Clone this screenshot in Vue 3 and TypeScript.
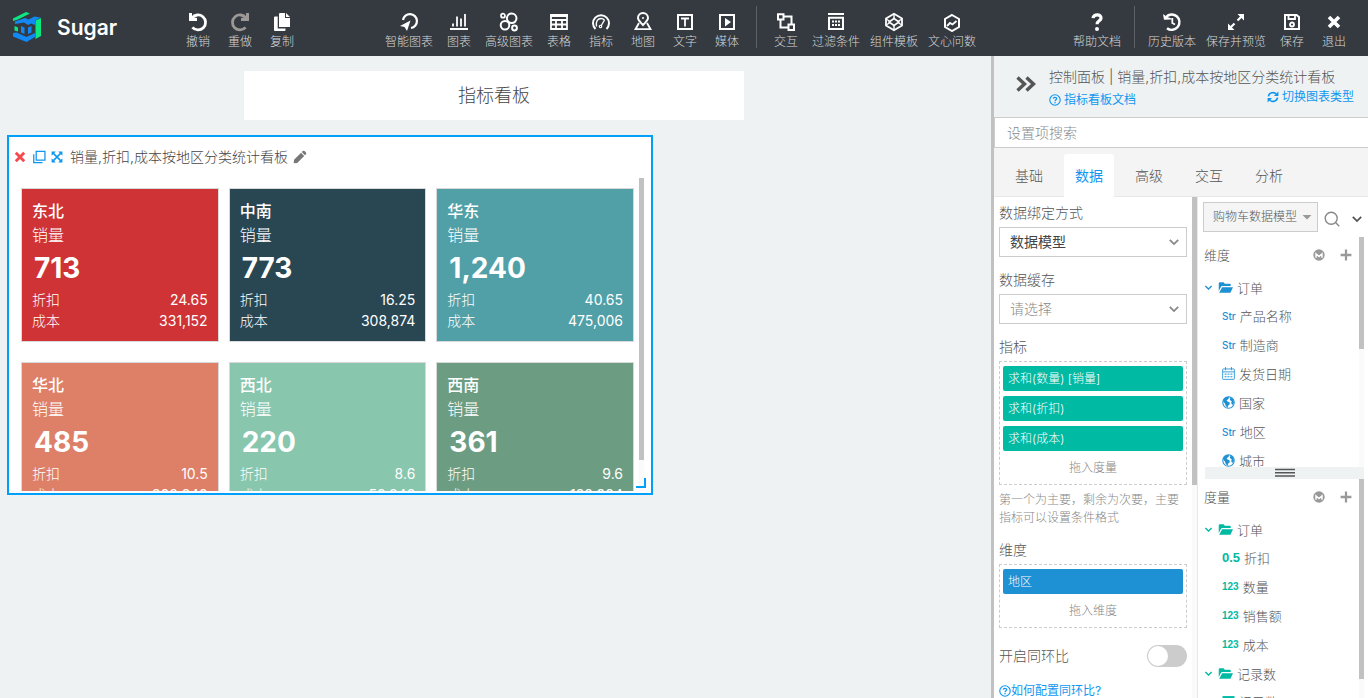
<script setup lang="ts">
import { h, ref } from 'vue'

interface Shape {
  d: string
  fill?: boolean
  w?: number
  color?: string
}

const circle = (x: number, y: number, r: number): string =>
  `M${x - r} ${y}a${r} ${r} 0 1 0 ${2 * r} 0a${r} ${r} 0 1 0 ${-2 * r} 0z`

const shapes: Record<string, Shape[]> = {
  logo: [
    { d: 'M1 7.5L14 1l4 1.6L5.5 8.8 1 10z', fill: true, color: '#0be881' },
    { d: 'M23.5 9.5l5.5-2.500v18l-5.500 3z', fill: true, color: '#0be881' },
    { d: 'M3 10.500L13 7l3.500 1.500L22.500 5.500l6 1-5.500 3v4.500l-4-1.500-3 1.500-4-2.500L3 13z', fill: true, color: '#1288f5' },
    { d: 'M1 22l3.500-.500 10 4.500 8.500-4v4L14.500 31 1 25.500z', fill: true, color: '#1288f5' },
    { d: 'M2.5 15l3.500 1.500V20.500l-3.500-1z', fill: true, color: '#0be881' },
    { d: 'M9 15l3.500 1.500v6.500L9 21.500zM16 16.500l3.500-1.500v6.500L16 23z', fill: true, color: '#1288f5' },
  ],
  undo: [
    { d: 'M1 1h3v3.6l1 .6L9 6v3H1z', fill: true },
    { d: 'M4 6A7.5 7.5 0 1 1 4.4 15.4', w: 2.8 },
  ],
  redo: [
    { d: 'M19 1h-3v3.6l-1 .6L11 6v3h8z', fill: true },
    { d: 'M16 6A7.5 7.5 0 1 0 15.6 15.4', w: 2.8 },
  ],
  copy: [
    { d: 'M8 1h5v5h5v9H7V2a1 1 0 0 1 1-1zM14 1l4 4h-4z', fill: true },
    { d: 'M2 5.5a1 1 0 0 1 1-1h2.7v12h7.8V18a1 1 0 0 1-1 1H3a1 1 0 0 1-1-1z', fill: true },
  ],
  smart: [
    { d: 'M4 8A7 7 0 1 1 12 16', w: 2.2 },
    { d: 'M11.5 8.5L1 14l4.5 1L8 19z', fill: true },
  ],
  bars: [{ d: 'M1 17h18M4 14.500v-3M8 14.500V4.500M12 14.500V6.500M16 14.500V2', w: 1.8 }],
  bubbles: [
    { d: circle(4, 3.7, 2), w: 1.7 },
    { d: circle(12.7, 6.3, 4.8), w: 2 },
    { d: circle(6, 13.3, 4.3), w: 2 },
    { d: circle(15.5, 16, 2.4), w: 2 },
  ],
  table: [{ d: 'M2 3h16v14H2zM2 8h16M2 12.5h16M7 8v9M13 8v9', w: 1.8 }, { d: 'M1 2h18v3H1z', fill: true }],
  gauge: [
    { d: 'M4.5 17A8 8 0 1 1 15.5 17', w: 2 },
    { d: 'M5.5 14.500C4.500 9 7 6.500 10 6.500c1.500 0 2.500.500 3.500 1.500M13.500 8l-3.500 6', w: 1.4 },
    { d: circle(9.5, 14.5, 1.2), w: 1.2 },
  ],
  place: [
    { d: 'M10 13C6.500 9.500 5 8 5 6a5 5 0 0 1 10 0c0 2-1.500 3.500-5 7z', w: 2 },
    { d: circle(10, 6, 1), fill: true },
    { d: 'M6 11l-3.500 6.200h15L14 11', w: 1.800 },
  ],
  text: [{ d: 'M3 3h14v14H3z', w: 2 }, { d: 'M6 6.500h8M10 6.500V14.500', w: 1.8 }],
  media: [{ d: 'M3 3h14v14H3z', w: 2 }, { d: 'M8 6l6 4-6 4.500z', fill: true }],
  link: [
    { d: 'M2 2.200h5.500V7.500H2zM12.500 12.500H18V18h-5.500zM7.500 4.500H15.500V12.500M4.500 7.500V15.500H12.500', w: 2 },
  ],
  filter: [
    { d: 'M2 2h16M3 5.800h14V17H3z', w: 2 },
    { d: 'M6 9.500h8M6 13h8', w: 2, color: 'dots' },
  ],
  cube: [
    { d: 'M10 1.800l8 4.700v7L10 18.200l-8-4.700v-7z', w: 1.800 },
    { d: 'M10 2v4.500M10 18v-4.500M2 7l3.500 2M18 7l-3.500 2M2 13l3.500-2M18 13l-3.500-2', w: 1.400 },
    { d: 'M10 6.500l5 3.500-5 3.500L5 10z', w: 1.600 },
  ],
  wenxin: [{ d: 'M10 3l7 4v8l-7 4-7-4V7z', w: 2 }, { d: 'M5 14l3-3 2.500 1.500L14.500 9', w: 1.800 }],
  help: [{ d: 'M6 6.200C6.300 1.500 14.500 1.800 14 6.200c-.3 2.800-3.900 2.500-3.900 6', w: 3.2 }, { d: circle(10, 17, 2), fill: true }],
  history: [
    { d: 'M1 2.200l1.500.8L4 4.500 9.500 6.500V7.500L2 7.700z', fill: true },
    { d: 'M4 5A7.700 7.700 0 1 1 5 16.200', w: 2.400 },
    { d: 'M10.300 6v5l2.700 1.500', w: 1.800 },
  ],
  expand: [
    { d: 'M11.500 2H18v6.500zM2 11.500V18h6.500z', fill: true },
    { d: 'M16 4l-4.500 4.500M8.500 11.500L4 16', w: 2.200 },
  ],
  save: [
    { d: 'M3 3h11.500L17 5v12H3z', w: 2 },
    { d: 'M6.500 3v4h6.500V3', w: 1.800 },
    { d: circle(10, 12.500, 2), w: 1.800 },
  ],
  close: [{ d: 'M5 5l10 10M15 5L5 15', w: 3.600 }],
  forward: [{ d: 'M1.500 3.500l7 6.500-7 6.500M10.500 3.500l7 6.500-7 6.500', w: 3.400 }],
  question: [
    { d: circle(10, 10, 8.700), w: 1.900 },
    { d: 'M7.200 8C7.300 4.800 13 5 12.800 8c-.1 1.800-2.700 1.700-2.700 4', w: 2.200 },
    { d: circle(10, 14.500, 1.300), fill: true },
  ],
  refresh: [
    { d: 'M2.500 9A7.500 7 0 0 1 15.500 5M17.500 11A7.500 7 0 0 1 4.500 15', w: 2.600 },
    { d: 'M19 1v7.500h-7.500zM1 19v-7.500h7.500z', fill: true },
  ],
  clone: [{ d: 'M6 2h12.500v12.500H6zM2.500 6v12h12.500', w: 1.800 }],
  arrows: [
    { d: 'M1 1h7L1 8zM19 1v7l-7-7zM1 19v-7l7 7zM19 19h-7l7-7z', fill: true },
    { d: 'M4 4l12 12M16 4L4 16', w: 2.600 },
  ],
  cross: [{ d: 'M4 4l12 12M16 4L4 16', w: 4 }],
  pencil: [{ d: 'M14 1.500a1.800 1.800 0 0 1 2.500 0l2 2a1.800 1.800 0 0 1 0 2.500L17 7.500 12.500 3zM11.500 4L16 8.500 6 18.500l-5 .5.500-5z', fill: true }],
  chevron: [{ d: 'M3 6.500l7 7 7-7', w: 3 }],
  caret: [{ d: 'M1 6h18l-9 9z', fill: true }],
  search: [{ d: circle(9, 9, 7.500), w: 1.700 }, { d: 'M14.500 14.500l4.500 4.500', w: 1.700 }],
  badge: [
    { d: circle(10, 10, 9.500), fill: true },
    { d: 'M5 14.500V8l5 4.500L15 8v6.500', w: 2.400, color: '#fff' },
  ],
  plus: [{ d: 'M10 1v18M1 10h18', w: 3.800 }],
  folder: [{ d: 'M1 14.500V4.500Q1 3 2.500 3h5l1.500 2h6.500Q17 5 17 6.500V8H5.500Q4.500 8 4 9zM5.500 9.500H20L16.500 17H1.500z', fill: true }],
  calendar: [
    { d: 'M2 3h16a1 1 0 0 1 1 1v14a1 1 0 0 1-1 1H2a1 1 0 0 1-1-1V4a1 1 0 0 1 1-1zM1 7.500h18M5.500 0v5M14.500 0v5', w: 1.300 },
    { d: 'M4 11h3M8.500 11h3M13 11h3M4 15h3M8.500 15h3M13 15h3', w: 1.500 },
  ],
  globe: [
    { d: circle(10, 10, 8.800), w: 1.600 },
    { d: 'M2 6l4-4 5-.500-1 3-3 2 1.500 2 3 1 .500 3-2.500 2-1 4-3-4-1-3L2 9zM13 2l4 3 1.500 5-2 4-2.500-3 1-3-3-2z', fill: true },
  ],
  grip: [{ d: 'M0 3h20M0 9.500h20M0 16h20', w: 2.600 }],
}

const UiIcon = (props: { name: string }) =>
  h(
    'svg',
    { viewBox: '0 0 20 20', 'aria-hidden': 'true', fill: 'none' },
    shapes[props.name].map((s) => {
      const dotted = s.color === 'dots'
      const color = dotted ? 'currentColor' : s.color ?? 'currentColor'
      return h('path', {
        d: s.d,
        fill: s.fill ? color : 'none',
        stroke: s.fill ? 'none' : color,
        'stroke-width': s.w,
        'stroke-dasharray': dotted ? '2 1' : undefined,
      })
    }),
  )
UiIcon.props = ['name']

interface Tool {
  icon: string
  label: string
  dim?: boolean
}

const editTools: Tool[] = [
  { icon: 'undo', label: '撤销' },
  { icon: 'redo', label: '重做', dim: true },
  { icon: 'copy', label: '复制' },
]
const widgetTools: Tool[] = [
  { icon: 'smart', label: '智能图表' },
  { icon: 'bars', label: '图表' },
  { icon: 'bubbles', label: '高级图表' },
  { icon: 'table', label: '表格' },
  { icon: 'gauge', label: '指标' },
  { icon: 'place', label: '地图' },
  { icon: 'text', label: '文字' },
  { icon: 'media', label: '媒体' },
]
const dataTools: Tool[] = [
  { icon: 'link', label: '交互' },
  { icon: 'filter', label: '过滤条件' },
  { icon: 'cube', label: '组件模板' },
  { icon: 'wenxin', label: '文心问数' },
]
const pageTools: Tool[] = [
  { icon: 'history', label: '历史版本' },
  { icon: 'expand', label: '保存并预览' },
  { icon: 'save', label: '保存' },
  { icon: 'close', label: '退出' },
]

const cards = [
  { name: '东北', tone: 'red', sales: '713', discount: '24.65', cost: '331,152' },
  { name: '中南', tone: 'navy', sales: '773', discount: '16.25', cost: '308,874' },
  { name: '华东', tone: 'teal', sales: '1,240', discount: '40.65', cost: '475,006' },
  { name: '华北', tone: 'coral', sales: '485', discount: '10.5', cost: '208,248' },
  { name: '西北', tone: 'mint', sales: '220', discount: '8.6', cost: '58,848' },
  { name: '西南', tone: 'green', sales: '361', discount: '9.6', cost: '188,984' },
]

const tabs = ['基础', '数据', '高级', '交互', '分析']
const activeTab = ref('数据')
const metrics = ['求和(数量) [销量]', '求和(折扣)', '求和(成本)']
const compare = ref(false)

const dimensionFields = [
  { type: 'Str', label: '产品名称' },
  { type: 'Str', label: '制造商' },
  { icon: 'calendar', label: '发货日期' },
  { icon: 'globe', label: '国家' },
  { type: 'Str', label: '地区' },
  { icon: 'globe', label: '城市' },
]
const measureFields = [
  { type: '0.5', label: '折扣' },
  { type: '123', label: '数量' },
  { type: '123', label: '销售额' },
  { type: '123', label: '成本' },
]
</script>

<template>
  <div class="app">
    <header class="topbar">
      <a class="brand" href="#">
        <svg class="brand-mark" viewBox="0 0 30 32" aria-hidden="true">
          <path v-for="s in shapes.logo" :key="s.d" :d="s.d" :fill="s.color" />
        </svg>
        <span>Sugar</span>
      </a>
      <nav class="tools edit">
        <button v-for="t in editTools" :key="t.label" type="button" class="tool" :class="{ dim: t.dim }">
          <UiIcon :name="t.icon" class="tool-icon" /><span>{{ t.label }}</span>
        </button>
      </nav>
      <nav class="tools">
        <button v-for="t in widgetTools" :key="t.label" type="button" class="tool">
          <UiIcon :name="t.icon" class="tool-icon" /><span>{{ t.label }}</span>
        </button>
        <i class="divider"></i>
        <button v-for="t in dataTools" :key="t.label" type="button" class="tool">
          <UiIcon :name="t.icon" class="tool-icon" /><span>{{ t.label }}</span>
        </button>
      </nav>
      <nav class="tools end">
        <button type="button" class="tool"><UiIcon name="help" class="tool-icon" /><span>帮助文档</span></button>
        <i class="divider"></i>
        <button v-for="t in pageTools" :key="t.label" type="button" class="tool">
          <UiIcon :name="t.icon" class="tool-icon" /><span>{{ t.label }}</span>
        </button>
      </nav>
    </header>

    <div class="workspace">
      <main class="canvas">
        <h1 class="board-title">指标看板</h1>
        <section class="widget">
          <div class="widget-head">
            <button type="button" class="mini danger" aria-label="删除"><UiIcon name="cross" /></button>
            <button type="button" class="mini" aria-label="复制组件"><UiIcon name="clone" /></button>
            <button type="button" class="mini small" aria-label="全屏"><UiIcon name="arrows" /></button>
            <h2>销量,折扣,成本按地区分类统计看板</h2>
            <button type="button" class="mini pencil" aria-label="编辑标题"><UiIcon name="pencil" /></button>
          </div>
          <div class="widget-body">
            <div class="cards">
              <article v-for="c in cards" :key="c.name" class="card" :class="c.tone">
                <h3>{{ c.name }}</h3>
                <p class="metric">销量</p>
                <p class="value">{{ c.sales }}</p>
                <p class="row"><span>折扣</span><span class="num">{{ c.discount }}</span></p>
                <p class="row"><span>成本</span><span class="num">{{ c.cost }}</span></p>
              </article>
            </div>
            <div class="track"><div class="thumb cards-thumb"></div></div>
          </div>
          <i class="resize"></i>
        </section>
      </main>

      <aside class="panel">
        <div class="panel-head">
          <button type="button" class="collapse" aria-label="收起面板"><UiIcon name="forward" /></button>
          <div class="panel-info">
            <h2>控制面板 | 销量,折扣,成本按地区分类统计看板</h2>
            <div class="panel-links">
              <a href="#"><UiIcon name="question" class="link-icon" />指标看板文档</a>
              <a href="#" class="switch-type"><UiIcon name="refresh" class="link-icon" />切换图表类型</a>
            </div>
          </div>
        </div>
        <input class="setting-search" type="text" placeholder="设置项搜索" aria-label="设置项搜索" />
        <div class="tabs">
          <button
            v-for="t in tabs"
            :key="t"
            type="button"
            class="tab"
            :class="{ active: t === activeTab }"
            @click="activeTab = t"
          >{{ t }}</button>
        </div>
        <div class="columns">
          <form class="settings" @submit.prevent>
            <label class="label" for="bind">数据绑定方式</label>
            <div class="select-box">
              <select id="bind"><option>数据模型</option></select>
              <UiIcon name="chevron" class="select-arrow" />
            </div>
            <label class="label" for="cache">数据缓存</label>
            <div class="select-box empty">
              <select id="cache"><option>请选择</option></select>
              <UiIcon name="chevron" class="select-arrow" />
            </div>
            <div class="label">指标</div>
            <div class="drop">
              <button v-for="m in metrics" :key="m" type="button" class="chip">{{ m }}</button>
              <span class="drop-hint">拖入度量</span>
            </div>
            <p class="note">第一个为主要，剩余为次要，主要指标可以设置条件格式</p>
            <div class="label">维度</div>
            <div class="drop">
              <button type="button" class="chip blue">地区</button>
              <span class="drop-hint">拖入维度</span>
            </div>
            <div class="toggle-row">
              <label for="compare">开启同环比</label>
              <input id="compare" v-model="compare" type="checkbox" class="toggle" />
            </div>
            <a href="#" class="doc-link"><UiIcon name="question" class="link-icon" />如何配置同环比?</a>
          </form>
          <div class="track"><div class="thumb settings-thumb"></div></div>

          <div class="model">
            <div class="model-bar">
              <div class="model-box">
                <select aria-label="数据模型"><option>购物车数据模型</option></select>
                <UiIcon name="caret" class="model-arrow" />
              </div>
              <button type="button" class="find" aria-label="搜索字段"><UiIcon name="search" /></button>
              <button type="button" class="more" aria-label="更多"><UiIcon name="chevron" /></button>
            </div>
            <section class="fields dims">
              <div class="list">
                <div class="fields-head">
                  <h3>维度</h3>
                  <button type="button" aria-label="管理维度"><UiIcon name="badge" /></button>
                  <button type="button" aria-label="新增维度"><UiIcon name="plus" /></button>
                </div>
                <div class="folder"><UiIcon name="chevron" class="fold" /><UiIcon name="folder" class="folder-icon" />订单</div>
                <div v-for="f in dimensionFields" :key="f.label" class="field">
                  <UiIcon v-if="f.icon" :name="f.icon" class="type-icon" />
                  <span v-else class="type">{{ f.type }}</span>{{ f.label }}
                </div>
              </div>
              <div class="track"><div class="thumb dims-thumb"></div></div>
            </section>
            <div class="splitter"><UiIcon name="grip" preserveAspectRatio="none" /></div>
            <section class="fields measures">
              <div class="list">
                <div class="fields-head">
                  <h3>度量</h3>
                  <button type="button" aria-label="管理度量"><UiIcon name="badge" /></button>
                  <button type="button" aria-label="新增度量"><UiIcon name="plus" /></button>
                </div>
                <div class="folder"><UiIcon name="chevron" class="fold" /><UiIcon name="folder" class="folder-icon" />订单</div>
                <div v-for="f in measureFields" :key="f.label" class="field">
                  <span class="type" :class="f.type === '123' ? 'integer' : 'decimal'">{{ f.type }}</span>{{ f.label }}
                </div>
                <div class="folder"><UiIcon name="chevron" class="fold" /><UiIcon name="folder" class="folder-icon" />记录数</div>
                <div class="field"><UiIcon name="table" class="type-icon" />记录数</div>
              </div>
              <div class="track"><div class="thumb measures-thumb"></div></div>
            </section>
          </div>
        </div>
      </aside>
    </div>
  </div>
</template>

<style>
body {
  background: #eef2f3;
}
</style>

<style scoped>
* {
  box-sizing: border-box;
}
.app {
  display: flex;
  flex-direction: column;
  height: 100vh;
  overflow: hidden;
  color: #555;
  background: #eef2f3;
  font-family: Inter, "Noto Sans CJK SC", sans-serif;
  font-size: 14px;
  font-weight: 300;
}
h1, h2, h3, p {
  margin: 0;
  font-weight: inherit;
}
button, input, select {
  margin: 0;
  padding: 0;
  border: 0;
  color: inherit;
  background: none;
  font: inherit;
}
a {
  color: #0f97f0;
  font-weight: 400;
  text-decoration: none;
}
svg {
  display: block;
  flex: none;
}

/* top bar */
.topbar {
  display: flex;
  flex: none;
  height: 56px;
  padding-right: 13px;
  background: #343a40;
}
.brand {
  display: flex;
  flex: none;
  align-items: center;
  gap: 15px;
  width: 177px;
  padding: 0 0 2px 12px;
  color: #fff;
  font-size: 21px;
  font-weight: 600;
}
.brand-mark {
  width: 30px;
  height: 32px;
}
.tools {
  display: flex;
}
.tools.edit {
  margin-right: 77px;
}
.tools.end {
  margin-left: auto;
}
.tool {
  display: flex;
  flex-direction: column;
  align-items: center;
  min-width: 42px;
  padding: 12px 5px 0;
  color: #fff;
  font-size: 12px;
  line-height: 20px;
  white-space: nowrap;
}
.tool span {
  color: #d4d6d8;
}
.tool-icon {
  width: 20px;
  height: 20px;
}
.tool.dim .tool-icon {
  color: #9b9896;
}
.divider {
  width: 1px;
  height: 42px;
  margin: 6px 8px 0;
  background: #5d6165;
}

/* canvas */
.workspace {
  display: flex;
  flex: 1;
  min-height: 0;
}
.canvas {
  flex: 1;
  min-width: 0;
  padding: 15px 10px 0 7px;
}
.board-title {
  width: 500px;
  margin: 0 auto 15px;
  background: #fff;
  color: #444;
  font-size: 18px;
  line-height: 49px;
  text-align: center;
}
.widget {
  position: relative;
  width: 646px;
  height: 360px;
  padding-bottom: 2px;
  border: 2px solid #00a0fa;
  background: #fff;
  display: flex;
  flex-direction: column;
}
.widget-head {
  display: flex;
  flex: none;
  align-items: center;
  gap: 5px;
  height: 41px;
  padding: 0 0 1px 4px;
}
.widget-head h2 {
  padding-left: 2px;
  color: #444;
  font-size: 14px;
  line-height: 20px;
}
.mini {
  color: #0f97f0;
}
.mini svg {
  width: 14px;
  height: 14px;
}
.mini.small svg {
  width: 12px;
  height: 12px;
}
.mini.danger {
  color: #f5494d;
}
.mini.pencil {
  color: #777;
}
.widget-body {
  display: flex;
  flex: 1;
  min-height: 0;
  padding-right: 7px;
}
.cards {
  display: grid;
  flex: 1;
  grid-template-columns: repeat(3, 1fr);
  gap: 20px 10px;
  align-content: start;
  padding: 10px 5px 0 12px;
  overflow: hidden;
}
.card {
  padding: 10px;
  border: 1px solid #d9d9d9;
  color: #fff;
}
.card h3, .metric {
  font-size: 16px;
  line-height: 24px;
}
.card h3 {
  font-weight: 500;
}
.value {
  padding-left: 2px;
  font-size: 28px;
  font-weight: 700;
  line-height: 42px;
}
.row {
  display: flex;
  justify-content: space-between;
  line-height: 21px;
}
.num {
  font-weight: 400;
}
.red { background: #cf3336; }
.navy { background: #294653; }
.teal { background: #51a0a7; }
.coral { background: #de8068; }
.mint { background: #88c6ae; }
.green { background: #6c9d82; }
.resize {
  position: absolute;
  right: 5px;
  bottom: 5px;
  width: 10px;
  height: 10px;
  border-right: 2px solid #00a0fa;
  border-bottom: 2px solid #00a0fa;
}
.track {
  flex: none;
  width: 5px;
  background: #fafafa;
}
.thumb {
  background: #c1c1c1;
}
.cards-thumb { height: 90%; }
.settings-thumb { height: 288px; }
.dims-thumb { height: 112px; }
.measures-thumb { height: 200px; }

/* control panel */
.panel {
  display: flex;
  flex: none;
  flex-direction: column;
  width: 377px;
  border-left: 3px solid #c1c1c1;
  background: #fff;
}
.panel-head {
  display: flex;
  flex: none;
  height: 61px;
  padding: 11px 14px 0 22px;
  background: #eef2f3;
}
.collapse {
  align-self: flex-start;
  width: 20px;
  margin: 7px 13px 0 0;
}
.collapse svg {
  width: 20px;
  height: 20px;
}
.panel-info {
  flex: 1;
  min-width: 0;
}
.panel-info h2 {
  font-size: 14px;
  line-height: 20px;
  white-space: nowrap;
}
.panel-links {
  display: flex;
  justify-content: space-between;
  align-items: flex-start;
  font-size: 12px;
  line-height: 20px;
}
.panel-links a {
  display: flex;
  align-items: center;
  gap: 3px;
  margin-top: 3px;
}
.panel-links .switch-type {
  margin-top: 0;
}
.link-icon {
  width: 12px;
  height: 12px;
}
.setting-search {
  flex: none;
  height: 31px;
  padding: 0 12px;
  border: 1px solid #ccc;
  border-right: 0;
  background: #fff;
}
.setting-search::placeholder {
  color: #888;
}
.tabs {
  display: flex;
  flex: none;
  gap: 10px;
  height: 49px;
  padding: 6px 10px 0;
  border-bottom: 1px solid #e8e8e8;
  background: #f4f4f4;
}
.tab {
  width: 50px;
  height: 43px;
  padding-bottom: 2px;
  border-radius: 3px 3px 0 0;
}
.tab.active {
  background: #fff;
  color: #0f97f0;
  font-weight: 400;
}
.columns {
  display: flex;
  flex: 1;
  min-height: 0;
}
.settings {
  flex: none;
  width: 198px;
  padding: 6px 5px 0;
  overflow: hidden;
}
.label {
  display: block;
  margin-bottom: 4px;
  line-height: 20px;
}
.select-box {
  display: flex;
  align-items: center;
  height: 30px;
  margin-bottom: 13px;
  border: 1px solid #ccc;
  color: #444;
  font-weight: 400;
}
.select-box select {
  flex: 1;
  height: 28px;
  padding: 0 0 2px 10px;
  appearance: none;
}
.select-box.empty {
  color: #888;
  font-weight: 300;
}
.select-arrow {
  width: 12px;
  height: 12px;
  margin-right: 6px;
  color: #888;
}
.drop {
  display: flex;
  flex-direction: column;
  gap: 5px;
  padding: 4px 3px 0;
  border: 1px dashed #ccc;
}
.chip {
  height: 25px;
  padding: 0 0 2px 5px;
  border-radius: 2px;
  color: #fff;
  background: #00baa4;
  font-size: 12px;
  text-align: left;
}
.chip.blue {
  background: #1e90d4;
}
.drop-hint {
  margin-top: -5px;
  color: #888;
  font-size: 12px;
  line-height: 33px;
  text-align: center;
}
.note {
  margin: 6px 0 13px;
  color: #888;
  font-size: 12px;
  line-height: 18px;
}
.toggle-row {
  display: flex;
  align-items: center;
  justify-content: space-between;
  margin: 17px 0 13px;
  line-height: 20px;
}
.toggle {
  width: 40px;
  height: 22px;
  padding: 1px;
  border-radius: 11px;
  background: #ccc;
  appearance: none;
}
.toggle::before {
  display: block;
  width: 20px;
  height: 20px;
  border-radius: 10px;
  background: #fff;
  content: "";
}
.toggle:checked {
  padding-left: 19px;
  background: #108ee9;
}
.doc-link {
  display: flex;
  align-items: center;
  font-size: 12px;
  line-height: 22px;
}

/* data model */
.model {
  display: flex;
  flex: 1;
  flex-direction: column;
  min-width: 0;
  padding: 0 4px 0 5px;
  border-left: 1px solid #e8e8e8;
}
.model-bar {
  display: flex;
  flex: none;
  align-items: center;
  height: 40px;
  padding-bottom: 1px;
}
.model-box {
  display: flex;
  align-items: center;
  width: 115px;
  height: 30px;
  padding-right: 5px;
  border: 1px solid #ccc;
  background: #f5f5f5;
  font-size: 12px;
}
.model-box select {
  flex: 1;
  height: 28px;
  padding-left: 9px;
  appearance: none;
}
.model-arrow {
  width: 10px;
  height: 10px;
  color: #999;
}
.find {
  margin: 4px 11px 0 6px;
  color: #888;
}
.find svg {
  width: 16px;
  height: 16px;
}
.more {
  padding-top: 4px;
}
.more svg {
  width: 12px;
  height: 12px;
}
.fields {
  display: flex;
  min-height: 0;
  font-size: 13px;
}
.dims {
  flex: 0 0 230px;
}
.measures {
  flex: 1;
}
.list {
  flex: 1;
  overflow: hidden;
}
.fields-head {
  display: flex;
  align-items: center;
  gap: 15px;
  height: 36px;
  padding: 0 7px 0 1px;
}
.fields-head h3 {
  flex: 1;
  font-size: 13px;
  line-height: 20px;
}
.fields-head button {
  color: #999;
}
.fields-head svg {
  width: 12px;
  height: 12px;
}
.folder, .field {
  display: flex;
  align-items: center;
  height: 29px;
  white-space: nowrap;
}
.folder {
  height: 28px;
}
.folder svg, .type, .type-icon {
  color: #1e90d4;
}
.measures .folder svg, .measures .type, .measures .type-icon {
  color: #00baa4;
}
.fold {
  width: 9px;
  height: 9px;
  margin: 0 5px 0 1px;
}
.folder-icon {
  width: 15px;
  height: 15px;
  margin-right: 4px;
}
.field {
  gap: 4px;
  padding-left: 19px;
}
.type {
  font-size: 10px;
  font-weight: 500;
}
.type.decimal {
  font-family: "Liberation Sans", sans-serif;
  font-size: 13px;
  font-weight: 700;
}
.type.integer {
  font-family: "Liberation Sans Narrow", "Liberation Sans", sans-serif;
  font-size: 10px;
  font-weight: 700;
}
.type-icon {
  width: 13px;
  height: 13px;
}
.splitter {
  display: flex;
  flex: none;
  justify-content: center;
  align-items: center;
  height: 12px;
  margin-left: 2px;
  background: #eef2f3;
}
.splitter svg {
  width: 20px;
  height: 10px;
}
</style>
